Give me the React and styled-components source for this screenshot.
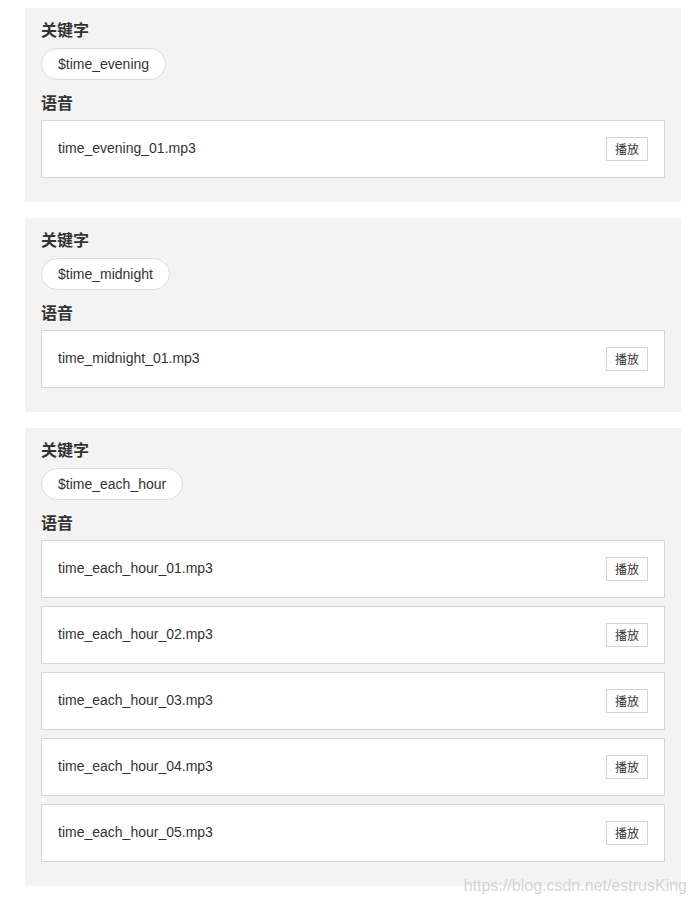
import React from 'react';
import styled, { createGlobalStyle } from 'styled-components';

const GlobalStyle = createGlobalStyle`
	body {
		margin: 0;
		background: #fff;
		font-family: "Liberation Sans", Arial, "Noto Sans CJK SC", sans-serif;
		color: #333;
	}
`;

const Page = styled.div`
	position: relative;
	display: flex;
	flex-direction: column;
	gap: 16px;
	padding: 8px 14px 19px 25px;
`;

const Panel = styled.section`
	background: #f3f3f3;
	padding: 12px 16px 24px 16px;
`;

const Heading = styled.h3`
	margin: 0;
	font-size: 16px;
	line-height: 22px;
	font-weight: bold;
	color: #333;
	font-family: "Liberation Sans", "Noto Sans CJK SC", sans-serif;
`;

const KeywordHeading = styled(Heading)`
	margin-bottom: 6px;
`;

const VoiceHeading = styled(Heading)`
	margin-top: 13px;
	margin-bottom: 5px;
`;

const Pill = styled.span`
	display: inline-flex;
	align-items: center;
	height: 30px;
	padding: 0 16px;
	border: 1px solid #dcdcdc;
	border-radius: 16px;
	background: #fff;
	font-size: 14px;
	color: #333;
`;

const FileList = styled.div`
	display: flex;
	flex-direction: column;
	gap: 8px;
`;

const FileRow = styled.div`
	display: flex;
	align-items: center;
	justify-content: space-between;
	height: 56px;
	padding: 0 16px;
	border: 1px solid #d6d6d6;
	background: #fff;
	font-size: 14px;
	color: #333;
	span {
		margin-top: -2px;
	}
`;

const PlayButton = styled.button`
	width: 42px;
	height: 24px;
	padding: 0;
	margin-top: -1px;
	border: 1px solid #d4d4d4;
	background: #fff;
	font-size: 12px;
	color: #333;
	font-family: "Noto Sans CJK SC", sans-serif;
	cursor: pointer;
`;

const Watermark = styled.div`
	position: absolute;
	right: 8px;
	bottom: 10px;
	font-size: 16px;
	color: rgba(205, 205, 205, 0.85);
	font-family: "Liberation Sans", Arial, sans-serif;
	pointer-events: none;
`;

const groups = [
	{ keyword: '$time_evening', files: ['time_evening_01.mp3'] },
	{ keyword: '$time_midnight', files: ['time_midnight_01.mp3'] },
	{
		keyword: '$time_each_hour',
		files: [
			'time_each_hour_01.mp3',
			'time_each_hour_02.mp3',
			'time_each_hour_03.mp3',
			'time_each_hour_04.mp3',
			'time_each_hour_05.mp3'
		]
	}
];

export default function App() {
	return (
		<>
			<GlobalStyle />
			<Page>
				{groups.map((group) => (
					<Panel key={group.keyword}>
						<KeywordHeading>关键字</KeywordHeading>
						<Pill>{group.keyword}</Pill>
						<VoiceHeading>语音</VoiceHeading>
						<FileList>
							{group.files.map((file) => (
								<FileRow key={file}>
									<span>{file}</span>
									<PlayButton>播放</PlayButton>
								</FileRow>
							))}
						</FileList>
					</Panel>
				))}
				<Watermark>https://blog.csdn.net/estrusKing</Watermark>
			</Page>
		</>
	);
}
